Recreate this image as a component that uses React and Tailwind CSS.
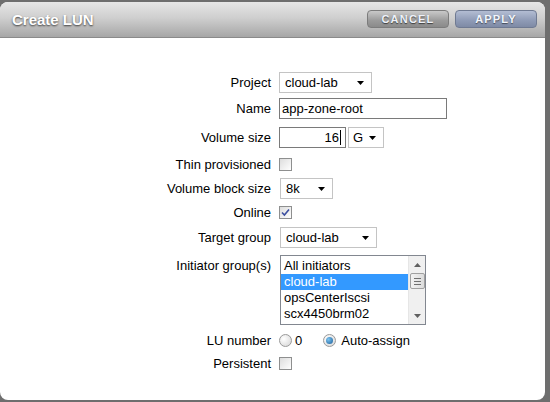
import React from "react";

const font = { fontFamily: '"Liberation Sans", Arial, sans-serif' };

function Arrow() {
  return (
    <svg width="7" height="4" viewBox="0 0 7 4" className="block">
      <polygon points="0,0 7,0 3.5,4" fill="#000" />
    </svg>
  );
}

function Select({ value, w, textPad = "pl-[5px]" }) {
  return (
    <div
      className={`flex items-center justify-between h-[21px] border border-[#c4c4c4] bg-white ${textPad} pr-[7px] text-[13px] text-black`}
      style={{ width: w }}
    >
      <span>{value}</span>
      <Arrow />
    </div>
  );
}

function Checkbox({ checked }) {
  return (
    <div className="relative w-[13px] h-[13px] border border-[#8e8f8f] bg-[linear-gradient(135deg,#dcdcdc,#ffffff)] flex items-center justify-center">
      <div className="w-[9px] h-[9px] bg-[linear-gradient(135deg,#e0e0e0,#fbfbfb)]" />
      {checked && (
        <svg width="9" height="9" viewBox="0 0 9 9" className="absolute left-[1px] top-[1px]">
          <path d="M1 4.5 L3.4 7 L8 1.5" stroke="#3c4fa0" strokeWidth="1.6" fill="none" />
        </svg>
      )}
    </div>
  );
}

function Radio({ checked }) {
  return (
    <div className="w-[13px] h-[13px] rounded-full border border-[#9a9a9a] bg-[radial-gradient(circle_at_35%_35%,#ffffff,#d4d4d4)] flex items-center justify-center">
      {checked && (
        <div className="w-[7px] h-[7px] rounded-full bg-[radial-gradient(circle_at_35%_35%,#7cc4f0,#1a5d99)]" />
      )}
    </div>
  );
}

function Row({ label, children, className = "", labelClass = "self-center" }) {
  return (
    <div className={`flex ${className}`}>
      <div className={`w-[271px] text-right text-[13px] text-black leading-[15px] ${labelClass}`}>{label}</div>
      <div className="ml-[8px] flex items-center">{children}</div>
    </div>
  );
}

export default function App() {
  return (
    <div className="w-[550px] h-[402px] bg-[#6e6e6e] pt-[2px]" style={font}>
      <div className="w-[545px] h-[398px] rounded-[8px] overflow-hidden bg-white flex flex-col">
        <div className="h-[36px] shrink-0 flex items-center justify-between pl-[12px] pr-[8px] bg-[linear-gradient(#e6e6e6,#cfcfcf_45%,#a6a6a6)] border-b border-[#8a8a8a]">
          <div className="text-[15px] font-bold text-white [text-shadow:0_1px_2px_rgba(0,0,0,0.7)] mt-[1px]">
            Create LUN
          </div>
          <div className="flex gap-[6px] mb-[1px]">
            <div className="w-[82px] h-[18px] rounded-[4px] border border-[#7c7c7c] bg-[linear-gradient(#c9c9c9,#9a9a9a_60%,#8a8a8a)] flex items-center justify-center text-[11px] font-bold tracking-[1.2px] text-[#eef2fa] [text-shadow:0_1px_1px_rgba(0,0,0,0.6)]">
              CANCEL
            </div>
            <div className="w-[82px] h-[18px] rounded-[4px] border border-[#6f7a92] bg-[linear-gradient(#b3bdd3,#8e9ab5_60%,#7e8aa5)] flex items-center justify-center text-[11px] font-bold tracking-[1.2px] text-[#f2f5fc] [text-shadow:0_1px_1px_rgba(0,0,0,0.5)]">
              APPLY
            </div>
          </div>
        </div>

        <div className="flex flex-col pt-[34px]">
          <Row label="Project" className="h-[21px]">
            <Select value="cloud-lab" w="93px" />
          </Row>
          <Row label="Name" className="h-[21px] mt-[5px]">
            <div className="w-[168px] h-[21px] border border-[#7a7a7a] bg-white pl-[2px] text-[13px] leading-[19px] text-black">
              app-zone-root
            </div>
          </Row>
          <Row label="Volume size" className="h-[21px] mt-[8px]">
            <div className="w-[67px] h-[21px] border border-[#7a7a7a] bg-white pr-[4px] text-[13px] leading-[19px] text-black flex justify-end items-center">
              <span>16</span>
              <span className="w-px h-[15px] bg-black ml-[1px]" />
            </div>
            <div className="ml-[2px]">
              <Select value="G" w="36px" textPad="pl-[4px]" />
            </div>
          </Row>
          <Row label="Thin provisioned" className="h-[21px] mt-[6px]">
            <Checkbox />
          </Row>
          <Row label="Volume block size" className="h-[21px] mt-[3px]">
            <div className="ml-[1px]">
              <Select value="8k" w="53px" />
            </div>
          </Row>
          <Row label="Online" className="h-[21px] mt-[3px]">
            <Checkbox checked />
          </Row>
          <Row label="Target group" className="h-[21px] mt-[4px]">
            <div className="ml-[1px]">
              <Select value="cloud-lab" w="97px" />
            </div>
          </Row>
          <Row label="Initiator group(s)" className="mt-[7px]" labelClass="pt-[3px]">
            <div className="ml-[1px] w-[146px] h-[70px] border border-[#828790] bg-white flex">
              <div className="flex-1 flex flex-col pt-[2px] text-[13px] leading-[16px] text-black">
                <div className="pl-[3px] h-[16px]">All initiators</div>
                <div className="pl-[3px] h-[16px] bg-[#3399ff] text-white">cloud-lab</div>
                <div className="pl-[3px] h-[16px]">opsCenterIscsi</div>
                <div className="pl-[3px] h-[16px]">scx4450brm02</div>
              </div>
              <div className="w-[17px] bg-[#f0f0f0] border-l border-[#e6e6e6] flex flex-col items-center">
                <div className="h-[17px] flex items-center justify-center">
                  <svg width="7" height="4" viewBox="0 0 7 4"><polygon points="0,4 7,4 3.5,0" fill="#606060" /></svg>
                </div>
                <div className="w-[15px] h-[16px] border border-[#a0a0a0] rounded-[2px] bg-[linear-gradient(90deg,#f2f2f2,#dcdcdc)] flex flex-col items-center justify-center gap-[2px]">
                  <div className="w-[7px] h-px bg-[#707070]" />
                  <div className="w-[7px] h-px bg-[#707070]" />
                  <div className="w-[7px] h-px bg-[#707070]" />
                </div>
                <div className="flex-1" />
                <div className="h-[17px] flex items-center justify-center">
                  <svg width="7" height="4" viewBox="0 0 7 4"><polygon points="0,0 7,0 3.5,4" fill="#606060" /></svg>
                </div>
              </div>
            </div>
          </Row>
          <Row label="LU number" className="h-[21px] mt-[5px]">
            <Radio />
            <span className="ml-[3px] text-[13px] text-black">0</span>
            <div className="ml-[21px]">
              <Radio checked />
            </div>
            <span className="ml-[5px] text-[13px] text-black">Auto-assign</span>
          </Row>
          <Row label="Persistent" className="h-[21px] mt-[2px]">
            <Checkbox />
          </Row>
        </div>
      </div>
    </div>
  );
}
